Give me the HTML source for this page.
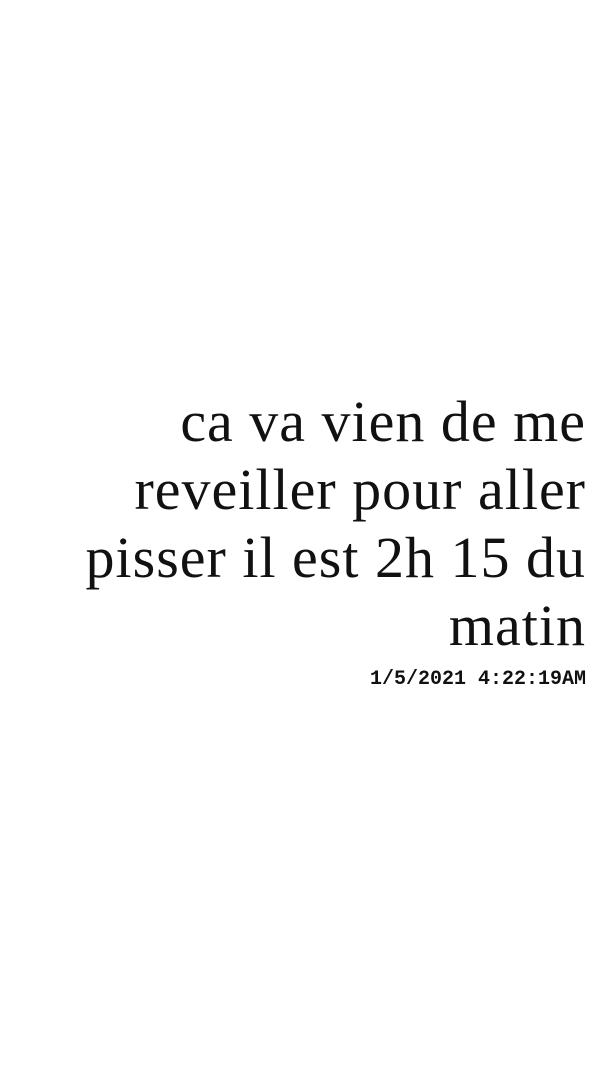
<!DOCTYPE html>
<html><head><meta charset="utf-8"><style>
html,body{margin:0;padding:0;background:#fff;width:608px;height:1080px;overflow:hidden}
.q{position:absolute;right:22px;top:388px;text-align:right;white-space:nowrap;font-family:"Liberation Serif",serif;font-size:58px;letter-spacing:1px;line-height:68px;color:#111}
.d{position:absolute;right:22px;top:669px;font-family:"Liberation Mono",monospace;font-weight:bold;font-size:20px;line-height:22px;color:#111}
</style></head><body>
<div class="q">ca va vien de me<br>reveiller pour aller<br>pisser il est 2h 15 du<br>matin</div>
<div class="d">1/5/2021 4:22:19AM</div>
</body></html>
